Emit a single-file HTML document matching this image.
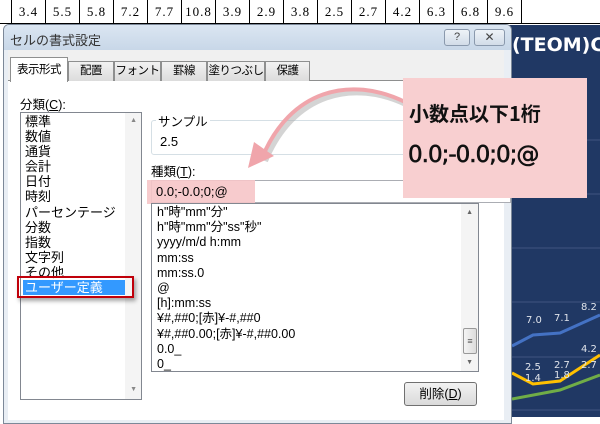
<!DOCTYPE html>
<html><head><meta charset="utf-8"><style>
*{margin:0;padding:0;box-sizing:border-box}
body{width:600px;height:417px;overflow:hidden;background:#fff;position:relative;font-family:"Liberation Sans","Noto Sans CJK JP",sans-serif;font-size:12px;color:#000}
.a{position:absolute}
.cell{position:absolute;top:0;height:24px;width:34px;border-right:1px solid #000;border-bottom:1px solid #000;font-family:"Liberation Serif","Noto Serif CJK SC",serif;font-size:13px;letter-spacing:1px;text-align:center;line-height:23px}
.tab{position:absolute;top:61px;height:20px;border:1px solid #8e8f8f;border-bottom:none;background:linear-gradient(#f2f2f2,#dcdcdc);text-align:center;line-height:19px;font-size:11.5px;white-space:nowrap;letter-spacing:-.5px}
.li{height:15.1px;line-height:15px;font-size:13px;padding-left:4px;white-space:nowrap}
.fl{height:15.2px;line-height:15px;font-size:12.5px;padding-left:4px;white-space:nowrap}
</style></head><body>
<div class="cell" style="left:-22px">8</div>
<div class="cell" style="left:12px">3.4</div><div class="cell" style="left:46px">5.5</div><div class="cell" style="left:80px">5.8</div><div class="cell" style="left:114px">7.2</div><div class="cell" style="left:148px">7.7</div><div class="cell" style="left:182px">10.8</div><div class="cell" style="left:216px">3.9</div><div class="cell" style="left:250px">2.9</div><div class="cell" style="left:284px">3.8</div><div class="cell" style="left:318px">2.5</div><div class="cell" style="left:352px">2.7</div><div class="cell" style="left:386px">4.2</div><div class="cell" style="left:420px">6.3</div><div class="cell" style="left:454px">6.8</div><div class="cell" style="left:488px">9.6</div><div class="cell" style="left:522px;width:80px"></div>
<div class="a" style="left:505px;top:25px;width:95px;height:392px;background:#203864"></div>
<div class="a" style="left:512px;top:34px;color:#fff;font-weight:bold;font-size:19px;font-family:'DejaVu Sans',sans-serif;white-space:nowrap">(TEOM)C</div>
<svg class="a" style="left:512px;top:25px" width="88" height="392">
<g stroke="#41557f" stroke-width="1"><line x1="0" y1="115" x2="88" y2="115"/><line x1="0" y1="169" x2="88" y2="169"/><line x1="0" y1="223" x2="88" y2="223"/><line x1="0" y1="277" x2="88" y2="277"/><line x1="0" y1="332" x2="88" y2="332"/><line x1="0" y1="385" x2="88" y2="385"/></g>
<polyline points="0,321 21,310 48,308 88,290" fill="none" stroke="#4472c4" stroke-width="3"/>
<polyline points="0,348 21,359 48,356 88,330" fill="none" stroke="#ffc000" stroke-width="3"/>
<polyline points="0,374 48,365 88,350" fill="none" stroke="#70ad47" stroke-width="3"/>
<g fill="#dfe3ea" font-size="10" font-family="DejaVu Sans,sans-serif"><text x="14" y="298">7.0</text><text x="42" y="296">7.1</text><text x="69" y="285">8.2</text><text x="69" y="327">4.2</text><text x="13" y="345">2.5</text><text x="42" y="343">2.7</text><text x="69" y="343">2.7</text><text x="13" y="356">1.4</text><text x="42" y="353">1.8</text></g>
</svg>
<div class="a" style="left:3px;top:24px;width:509px;height:400px;background:#e9eef4;border:1px solid #7c8898;border-radius:6px 6px 0 0"></div>
<div class="a" style="left:4px;top:25px;width:507px;height:25px;background:linear-gradient(#dbe6f2,#c8d7e8);border-radius:5px 5px 0 0"></div>
<div class="a" style="left:10px;top:30px;font-size:13px;color:#333">セルの書式設定</div>
<div class="a" style="left:444px;top:29px;width:26px;height:17px;border:1px solid #8a99ad;border-radius:3px;background:linear-gradient(#eef3f8,#d2dce8);text-align:center;font-size:11px;line-height:15px;color:#444">?</div>
<div class="a" style="left:474px;top:29px;width:31px;height:17px;border:1px solid #8a99ad;border-radius:3px;background:linear-gradient(#eef3f8,#d2dce8);text-align:center;font-size:12px;line-height:15px;color:#444">✕</div>
<div class="a" style="left:8px;top:50px;width:496px;height:370px;background:#f0f0f0"></div>
<div class="a" style="left:8px;top:80px;width:496px;height:340px;background:#fff;border-top:1px solid #8e8f8f"></div>
<div class="tab" style="left:10px;top:57px;width:58px;height:25px;background:#fff;line-height:24px;z-index:2">表示形式</div>
<div class="tab" style="left:68px;width:46px">配置</div>
<div class="tab" style="left:114px;width:47px">フォント</div>
<div class="tab" style="left:161px;width:46px">罫線</div>
<div class="tab" style="left:207px;width:58px">塗りつぶし</div>
<div class="tab" style="left:265px;width:45px">保護</div>
<div class="a" style="left:20px;top:94px;font-size:12.5px">分類(<u>C</u>):</div>
<div class="a" style="left:20px;top:112px;width:122px;height:288px;border:1px solid #828790;background:#fff">
 <div style="padding-top:1px">
 <div class="li">標準</div><div class="li">数値</div><div class="li">通貨</div><div class="li">会計</div><div class="li">日付</div><div class="li">時刻</div><div class="li">パーセンテージ</div><div class="li">分数</div><div class="li">指数</div><div class="li">文字列</div><div class="li">その他</div>
 <div class="li" style="background:#3399ff;color:#fff;width:102px;margin-left:2px;padding-left:2px">ユーザー定義</div></div>
 <div class="a" style="right:0;top:0;width:16px;height:286px;background:#f4f4f4"></div>
 <div class="a" style="right:4px;top:4px;font-size:7px;color:#888">▲</div>
 <div class="a" style="right:4px;bottom:6px;font-size:7px;color:#888">▼</div>
</div>
<div class="a" style="left:17px;top:276px;width:117px;height:22px;border:2px solid #c0000a;box-shadow:2px 3px 4px rgba(0,0,0,.35)"></div>
<div class="a" style="left:151px;top:120px;width:360px;height:35px;border:1px solid #d5dfe5;border-radius:3px"></div>
<div class="a" style="left:156px;top:111px;background:#fff;padding:0 2px;font-size:12.5px">サンプル</div>
<div class="a" style="left:160px;top:134px;font-size:13px">2.5</div>
<div class="a" style="left:151px;top:161px;font-size:12.5px">種類(<u>T</u>):</div>
<div class="a" style="left:151px;top:180px;width:360px;height:23px;border:1px solid #abadb3;background:#fff"></div>
<div class="a" style="left:147px;top:180px;width:108px;height:24px;background:#f6c5c8;opacity:.9"></div>
<div class="a" style="left:156px;top:184px;font-size:13px">0.0;-0.0;0;@</div>
<div class="a" style="left:151px;top:203px;width:328px;height:169px;border:1px solid #828790;background:#fff;overflow:hidden">
 <div style="padding-top:1px;padding-left:1px">
 <div class="fl">h"時"mm"分"</div><div class="fl">h"時"mm"分"ss"秒"</div><div class="fl">yyyy/m/d h:mm</div><div class="fl">mm:ss</div><div class="fl">mm:ss.0</div><div class="fl">@</div><div class="fl">[h]:mm:ss</div><div class="fl">¥#,##0;[赤]¥-#,##0</div><div class="fl">¥#,##0.00;[赤]¥-#,##0.00</div><div class="fl">0.0_</div><div class="fl">0_</div></div>
 <div class="a" style="right:0;top:0;width:17px;height:167px;background:#f4f4f4"></div>
 <div class="a" style="right:5px;top:5px;font-size:7px;color:#666">▲</div>
 <div class="a" style="right:1px;top:124px;width:14px;height:26px;border:1px solid #999;border-radius:2px;background:linear-gradient(90deg,#f4f4f4,#dcdcdc);font-size:9px;text-align:center;line-height:24px;color:#555">≡</div>
 <div class="a" style="right:5px;bottom:5px;font-size:7px;color:#666">▼</div>
</div>
<div class="a" style="left:404px;top:382px;width:73px;height:24px;border:1px solid #707070;border-radius:3px;background:linear-gradient(#f2f2f2,#dadada);text-align:center;line-height:22px;font-size:12.5px">削除(<u>D</u>)</div>
<svg class="a" style="left:230px;top:80px" width="180" height="110">
<path d="M175 22 C120 -5 60 10 32 78" fill="none" stroke="#aaa" stroke-width="6" opacity=".5" transform="translate(3,3)"/>
<path d="M175 22 C120 -5 60 10 32 78" fill="none" stroke="#f0a5ab" stroke-width="4"/>
<polygon points="18,88 24,62 44,76" fill="#f0a5ab"/>
</svg>
<div class="a" style="left:403px;top:78px;width:184px;height:120px;background:#f8cfd0"></div>
<div class="a" style="left:409px;top:98px;font-size:20px;font-weight:bold;color:#111;font-family:'Noto Sans CJK JP',sans-serif;white-space:nowrap">小数点以下1桁</div>
<div class="a" style="left:408px;top:142px;font-size:23px;color:#111;font-family:'DejaVu Sans',sans-serif;letter-spacing:-1px;white-space:nowrap;-webkit-text-stroke:.6px #111">0.0;-0.0;0;@</div>
</body></html>
